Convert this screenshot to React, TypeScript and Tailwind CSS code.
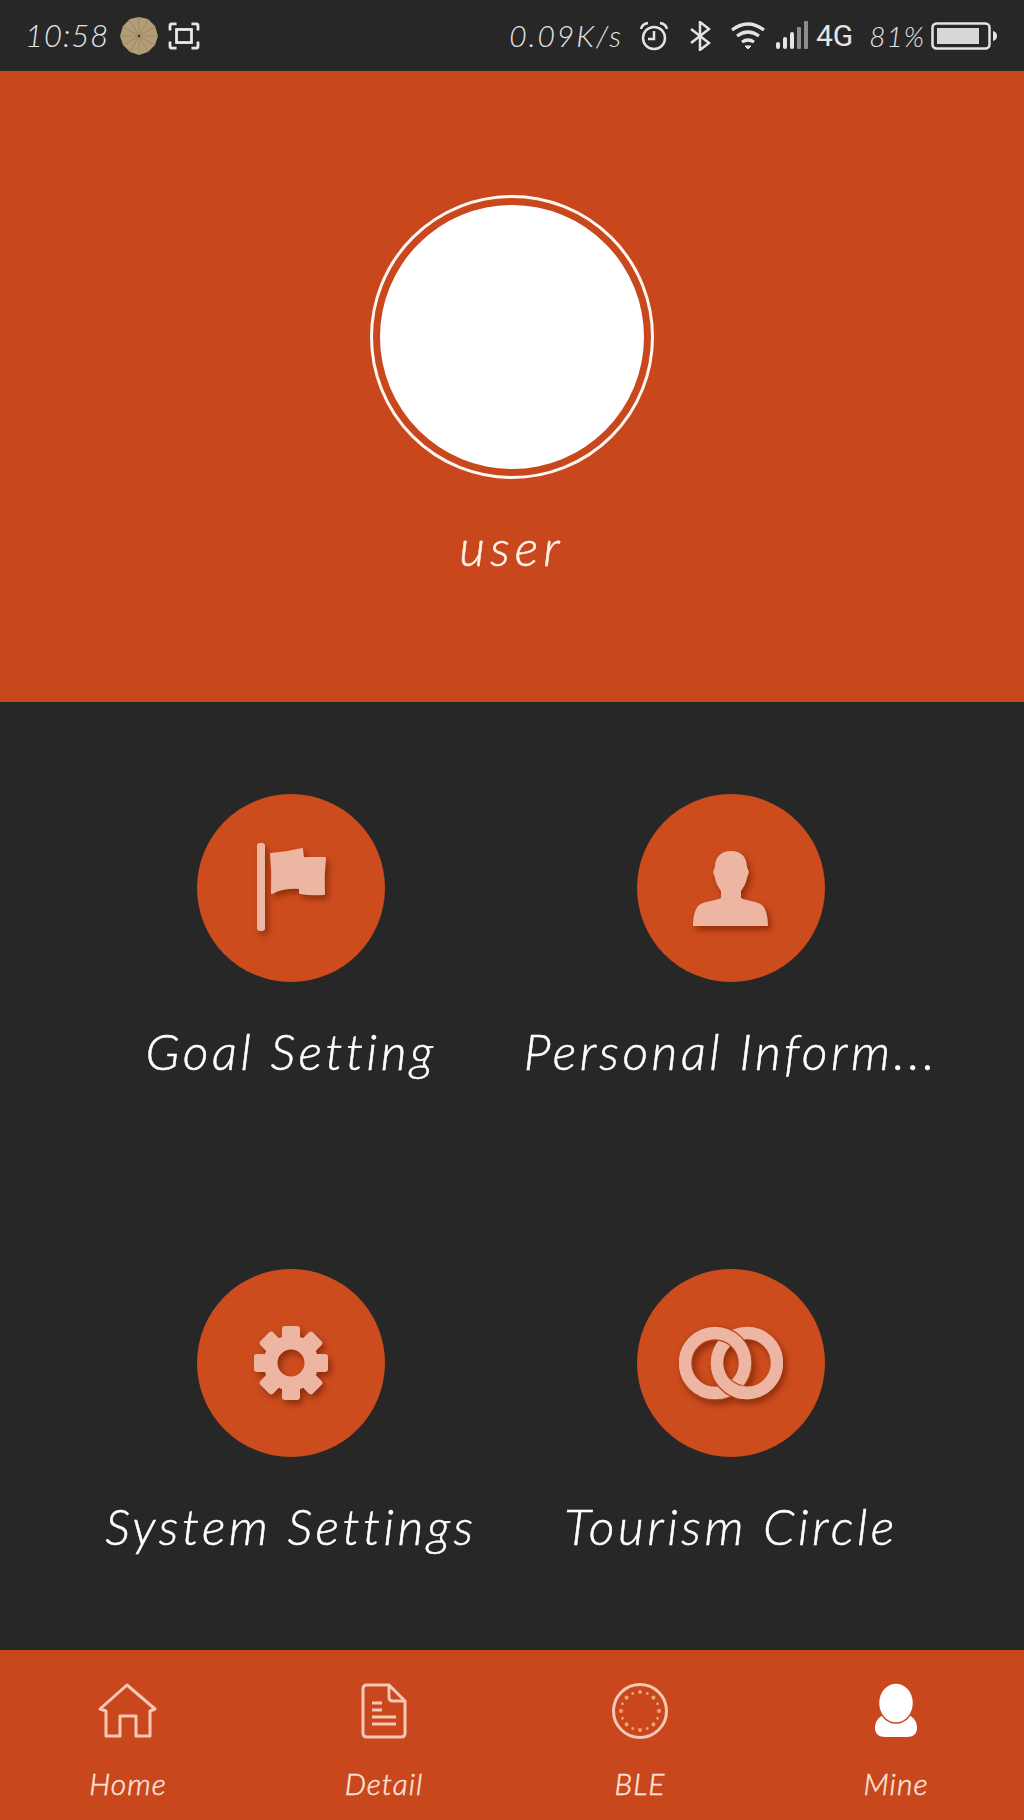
import type { ReactNode } from "react";

const hand = "font-['Lato','Open_Sans',sans-serif] italic font-light";
const handThick = "font-['Lato','Open_Sans',sans-serif] italic font-light [-webkit-text-stroke:0.5px_currentColor]";

function ScanIcon() {
  return (
    <svg width="32" height="28" viewBox="0 0 34 30" fill="none" stroke="#e8e8e8" strokeWidth="3">
      <path d="M2 9V4q0-2 2-2h5M25 2h5q2 0 2 2v5M32 21v5q0 2-2 2h-5M9 28H4q-2 0-2-2v-5" />
      <rect x="9" y="8" width="16" height="14" />
    </svg>
  );
}

function UmbrellaBadge() {
  const spokes = [0, 30, 60, 90, 120, 150];
  return (
    <svg width="38" height="38" viewBox="0 0 38 38">
      <polygon points="19,0 28,2 35,9 38,19 35,28 28,35 19,38 10,35 3,28 0,19 3,9 10,2" fill="#b39d78" />
      {spokes.map((a) => (
        <line key={a} x1="19" y1="1" x2="19" y2="37" stroke="#a18a62" strokeWidth="1" transform={`rotate(${a} 19 19)`} />
      ))}
      <circle cx="19" cy="19" r="1.2" fill="#3a3025" />
    </svg>
  );
}

function AlarmIcon() {
  return (
    <svg width="30" height="30" viewBox="0 0 30 30" fill="none" stroke="#e4e4e4" strokeWidth="2.5">
      <circle cx="15" cy="17" r="11" />
      <path d="M15 10v8h-6" />
      <path d="M2 8q1-5 7-6M28 8q-1-5-7-6" />
    </svg>
  );
}

function BluetoothIcon() {
  return (
    <svg width="22" height="30" viewBox="0 0 22 30" fill="none" stroke="#e4e4e4" strokeWidth="2.5">
      <path d="M2 8l18 14-9 7V1l9 7L2 22" />
    </svg>
  );
}

function WifiIcon() {
  return (
    <svg width="34" height="28" viewBox="0 0 34 28" fill="none" stroke="#e4e4e4" strokeWidth="3.2">
      <path d="M1 8q16-12 32 0M6 14q11-8 22 0M11 20q6-4 12 0" />
      <path d="M14 24h6l-3 3z" fill="#e4e4e4" strokeWidth="1" />
    </svg>
  );
}

function SignalIcon() {
  return (
    <svg width="32" height="29" viewBox="0 0 32 29">
      <rect x="0" y="21" width="4" height="7" rx="2" fill="#e4e4e4" />
      <rect x="7" y="16" width="4" height="12" rx="2" fill="#e4e4e4" />
      <rect x="14" y="11" width="4" height="17" rx="2" fill="#e4e4e4" />
      <rect x="21" y="6" width="4" height="22" rx="1" fill="#8c8c8c" />
      <rect x="28" y="0" width="4" height="28" rx="1" fill="#8c8c8c" />
    </svg>
  );
}

function BatteryIcon() {
  return (
    <svg width="66" height="28" viewBox="0 0 66 28">
      <rect x="1.5" y="1.5" width="57" height="25" rx="4" fill="none" stroke="#e4e4e4" strokeWidth="2.5" />
      <rect x="6" y="6" width="42" height="16" fill="#d8d8d8" />
      <path d="M62 9q4 1 4 5t-4 5z" fill="#e4e4e4" />
    </svg>
  );
}

function FlagIcon() {
  return (
    <svg width="80" height="100" viewBox="0 0 80 100" className="drop-shadow-[3px_4px_3px_rgba(110,30,0,0.65)]">
      <rect x="6" y="5" width="8" height="88" rx="3" fill="#edb6a3" />
      <path
        d="M20 16Q36 15 51 11L52 20L74 20Q72 38 73 56Q60 57 49 55L49 50Q32 49 21 55Q22 35 20 16Z"
        fill="#edb6a3"
        stroke="#edb6a3"
        strokeWidth="2"
        strokeLinejoin="round"
      />
    </svg>
  );
}

function PersonIcon() {
  return (
    <svg width="80" height="80" viewBox="0 0 80 80" className="drop-shadow-[3px_4px_3px_rgba(110,30,0,0.65)]">
      <path
        d="M40 3C29 3 24 10 24 19L22 24L24 30C25 36 28 40 30 43L30 50C25 53 12 53 7 58C3 63 2 72 2 78L77 78C77 72 76 63 72 58C67 53 55 53 50 50L50 43C52 40 55 36 56 30L58 24L56 19C56 10 51 3 40 3Z"
        fill="#edb6a3"
      />
    </svg>
  );
}

function GearIcon() {
  const teeth = [0, 45, 90, 135, 180, 225, 270, 315];
  return (
    <svg width="80" height="80" viewBox="0 0 80 80" className="drop-shadow-[3px_4px_3px_rgba(110,30,0,0.65)]">
      {teeth.map((a) => (
        <rect key={a} x="31" y="3" width="18" height="16" rx="3" fill="#edb6a3" transform={`rotate(${a} 40 40)`} />
      ))}
      <circle cx="40" cy="40" r="20.5" fill="none" stroke="#edb6a3" strokeWidth="14" />
    </svg>
  );
}

function RingsIcon() {
  return (
    <svg width="104" height="76" viewBox="0 0 104 76" fill="none" className="drop-shadow-[3px_4px_3px_rgba(110,30,0,0.65)]">
      <circle cx="68" cy="38" r="30" stroke="#edb6a3" strokeWidth="12.5" />
      <circle cx="36" cy="38" r="30" stroke="#b9431a" strokeWidth="15" />
      <circle cx="36" cy="38" r="30" stroke="#edb6a3" strokeWidth="12.5" />
      <path d="M62 67.4A30 30 0 0 1 42 53" stroke="#b9431a" strokeWidth="15" />
      <path d="M72 67.7A30 30 0 0 1 38.4 43" stroke="#edb6a3" strokeWidth="12.5" />
    </svg>
  );
}

function HomeIcon() {
  return (
    <svg width="60" height="56" viewBox="0 0 60 56" fill="none" stroke="#f6c8b6" strokeWidth="3" strokeLinejoin="round">
      <path d="M2 26L29 2L57 26L52 28L52 53H38V33H22V53H8V28Z" />
    </svg>
  );
}

function FileIcon() {
  return (
    <svg width="46" height="56" viewBox="0 0 46 56" fill="none" stroke="#f6c8b6" strokeWidth="3">
      <path d="M6 2H28L44 18V50Q44 54 40 54H6Q2 54 2 50V6Q2 2 6 2Z" />
      <path d="M28 3V14Q28 18 32 18H43" />
      <path d="M11 20H21M11 27H21M11 34H35M11 41H35" />
    </svg>
  );
}

function BleIcon() {
  const dots = [...Array(16).keys()].map((i) => i * 22.5);
  return (
    <svg width="56" height="56" viewBox="0 0 56 56" fill="none">
      <circle cx="28" cy="28" r="26.5" stroke="#f6c8b6" strokeWidth="3" />
      {dots.map((a) => (
        <circle key={a} cx="28" cy="9" r={a % 45 === 0 ? 2 : 1.4} fill="#f3a27f" transform={`rotate(${a} 28 28)`} />
      ))}
    </svg>
  );
}

function MineIcon() {
  return (
    <svg width="44" height="56" viewBox="0 0 44 56">
      <path d="M10 32C2 35 1 41 1 45C1 51 5 54 11 54H33C39 54 43 51 43 45C43 41 42 35 34 32Z" fill="#ffffff" />
      <ellipse cx="22" cy="20" rx="17.5" ry="20" fill="#ffffff" stroke="#c8471d" strokeWidth="1.5" />
    </svg>
  );
}

function MenuItem({ icon, label }: { icon: ReactNode; label: string }) {
  return (
    <div className="flex flex-col items-center">
      <div className="flex h-[188px] w-[188px] items-center justify-center rounded-full bg-[#cc4c1e]">
        {icon}
      </div>
      <p className={`mt-[39px] text-[50px] leading-[60px] tracking-[3.5px] whitespace-nowrap text-white ${handThick}`}>
        {label}
      </p>
    </div>
  );
}

function TabItem({ icon, label }: { icon: ReactNode; label: string }) {
  return (
    <div className="flex flex-col items-center">
      <div className="flex h-[56px] items-center justify-center">{icon}</div>
      <p className={`mt-[26px] text-[30px] leading-[36px] tracking-[1px] text-[#fbe3d8] ${handThick}`}>
        {label}
      </p>
    </div>
  );
}

export default function App() {
  return (
    <div className="flex h-[1820px] w-full flex-col bg-[#272727]">
      {/* Status bar */}
      <div className="flex h-[71px] items-center justify-between pr-[27px] pl-[25px] text-[#e4e4e4]">
        <div className="flex items-center">
          <span className={`text-[31px] tracking-[1px] ${hand}`}>10:58</span>
          <div className="ml-[11px]">
            <UmbrellaBadge />
          </div>
          <div className="ml-[10px]">
            <ScanIcon />
          </div>
        </div>
        <div className="flex items-center">
          <span className={`text-[30px] tracking-[2px] ${hand}`}>0.09K/s</span>
          <div className="ml-[16px]">
            <AlarmIcon />
          </div>
          <div className="ml-[20px]">
            <BluetoothIcon />
          </div>
          <div className="ml-[20px]">
            <WifiIcon />
          </div>
          <div className="ml-[11px]">
            <SignalIcon />
          </div>
          <span className="ml-[8px] font-['Roboto',sans-serif] text-[30px] leading-none">4G</span>
          <span className={`ml-[16px] text-[28px] tracking-[1px] ${hand}`}>81%</span>
          <div className="ml-[6px]">
            <BatteryIcon />
          </div>
        </div>
      </div>

      {/* Profile header */}
      <div className="flex h-[631px] flex-col items-center bg-[#c8471d] pt-[124px]">
        <div className="flex h-[284px] w-[284px] items-center justify-center rounded-full border-[3px] border-[#fff8f2]">
          <div className="h-[264px] w-[264px] rounded-full bg-white" />
        </div>
        <p className={`mt-[38px] text-[50px] leading-[60px] tracking-[5px] text-[#fff3ea] ${handThick}`}>user</p>
      </div>

      {/* Menu grid */}
      <div className="grid flex-1 grid-cols-2 content-start gap-y-[188px] pt-[92px] pr-[73px] pl-[71px]">
        <MenuItem icon={<FlagIcon />} label="Goal Setting" />
        <MenuItem icon={<PersonIcon />} label="Personal Inform..." />
        <MenuItem icon={<GearIcon />} label="System Settings" />
        <MenuItem icon={<RingsIcon />} label="Tourism Circle" />
      </div>

      {/* Bottom tabs */}
      <div className="grid h-[170px] grid-cols-4 bg-[#c8471d] pt-[33px]">
        <TabItem icon={<HomeIcon />} label="Home" />
        <TabItem icon={<FileIcon />} label="Detail" />
        <TabItem icon={<BleIcon />} label="BLE" />
        <TabItem icon={<MineIcon />} label="Mine" />
      </div>
    </div>
  );
}
